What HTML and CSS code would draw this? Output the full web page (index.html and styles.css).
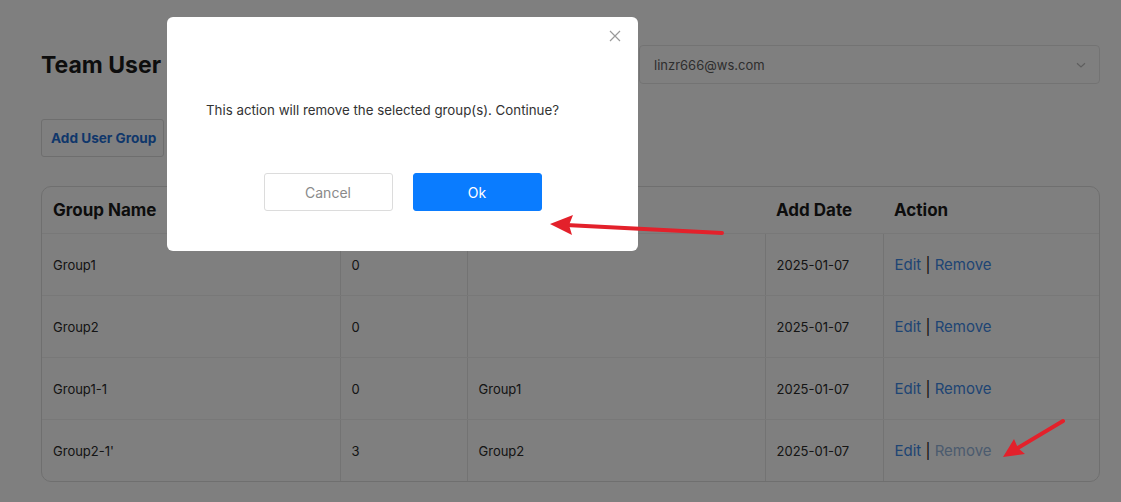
FILE: index.html
```html
<!DOCTYPE html>
<html lang="en">
<head>
<meta charset="utf-8">
<title>Team User Group</title>
<link rel="stylesheet" href="styles.css">
</head>
<body>
<div class="page">
  <div class="topbar">
    <h1 class="title">Team User Group</h1>
    <div class="select">
      <span class="select-value">linzr666@ws.com</span>
      <svg class="chev" width="12" height="12" viewBox="0 0 12 12"><path d="M2 4.2 L6 8 L10 4.2" fill="none" stroke="#bdbdbd" stroke-width="1.2"/></svg>
    </div>
  </div>
  <div class="toolbar">
    <button class="btn-add">Add User Group</button>
  </div>
  <div class="table-wrap">
    <table class="grid">
      <thead>
        <tr><th class="c1">Group Name</th><th class="c2">Users</th><th class="c3">Parent Group</th><th class="c4">Add Date</th><th class="c5">Action</th></tr>
      </thead>
      <tbody>
        <tr><td>Group1</td><td>0</td><td></td><td>2025-01-07</td><td class="act"><a>Edit</a> | <a>Remove</a></td></tr>
        <tr><td>Group2</td><td>0</td><td></td><td>2025-01-07</td><td class="act"><a>Edit</a> | <a>Remove</a></td></tr>
        <tr><td>Group1-1</td><td>0</td><td>Group1</td><td>2025-01-07</td><td class="act"><a>Edit</a> | <a>Remove</a></td></tr>
        <tr><td>Group2-1'</td><td>3</td><td>Group2</td><td>2025-01-07</td><td class="act"><a>Edit</a> | <a class="hover">Remove</a></td></tr>
      </tbody>
    </table>
  </div>
</div>

<div class="mask"></div>

<div class="modal">
  <div class="modal-head">
    <svg class="close" width="12" height="12" viewBox="0 0 12 12"><path d="M1 1 L11 11 M11 1 L1 11" stroke="#9a9a9a" stroke-width="1.2"/></svg>
  </div>
  <p class="modal-msg">This action will remove the selected group(s). Continue?</p>
  <div class="modal-actions">
    <button class="btn-cancel">Cancel</button>
    <button class="btn-ok">Ok</button>
  </div>
</div>

<svg class="annot" width="1121" height="502" viewBox="0 0 1121 502">
  <g fill="#e3212b" stroke="#e3212b">
    <line x1="722" y1="233" x2="566" y2="225" stroke-width="4" stroke-linecap="round"/>
    <polygon points="550,224 573,215 569,225 572,235" stroke="none"/>
    <line x1="1063" y1="421" x2="1016" y2="449" stroke-width="4" stroke-linecap="round"/>
    <polygon points="1003,457 1014,439 1018,448 1025,454" stroke="none"/>
  </g>
</svg>
</body>
</html>
```

FILE: styles.css
```css
html, body {
  margin: 0;
  padding: 0;
  background: #ffffff;
  font-family: Inter, "Liberation Sans", Arial, sans-serif;
  color: #222;
  overflow: hidden;
}

.page {
  width: 1059px;
  padding: 45px 21px 0 41px;
}

.topbar {
  display: flex;
  align-items: center;
  justify-content: space-between;
  height: 39px;
}

.title {
  margin: 0;
  font-size: 23px;
  font-weight: 700;
  color: #1a1a1a;
}

.select {
  width: 461px;
  height: 39px;
  border: 1px solid #e6e6e6;
  border-radius: 4px;
  display: flex;
  align-items: center;
  justify-content: space-between;
  padding: 0 12px 0 14px;
  box-sizing: border-box;
}

.select-value {
  font-size: 13px;
  color: #5c5c5c;
}

.toolbar {
  margin-top: 35px;
  display: flex;
}

.btn-add {
  height: 38px;
  width: 123px;
  background: #fff;
  border: 1px solid #dcdcdc;
  border-radius: 3px;
  font-family: inherit;
  font-size: 13.6px;
  font-weight: 700;
  color: #1f6fd6;
  padding: 0 9px;
  text-align: left;
  white-space: nowrap;
}

.table-wrap {
  margin-top: 29px;
  border: 1px solid #dedede;
  border-radius: 10px;
  overflow: hidden;
}

.grid {
  width: 100%;
  border-collapse: collapse;
  table-layout: fixed;
}

.grid th {
  height: 46px;
  text-align: left;
  font-size: 17px;
  font-weight: 700;
  color: #1a1a1a;
  padding: 0 11px;
  border-bottom: 1px solid #f0f0f0;
}

.grid td {
  height: 61px;
  font-size: 13px;
  color: #2a2a2a;
  padding: 0 11px;
  border-bottom: 1px solid #f0f0f0;
  border-left: 1px solid #e6e6e6;
}

.grid td:first-child { border-left: none; }
.grid tbody tr:last-child td { border-bottom: none; }

.c1 { width: 276px; }
.c2 { width: 105px; }
.c3 { width: 276px; }
.c4 { width: 96px; }

.grid td.act {
  font-size: 15px;
  color: #1a1a1a;
}

.act a {
  color: #3f8ae8;
  cursor: pointer;
}

.act a.hover {
  color: #97b6dd;
}

.mask {
  position: fixed;
  inset: 0;
  background: rgba(0, 0, 0, 0.5);
}

.modal {
  position: fixed;
  left: 167px;
  top: 17px;
  width: 471px;
  height: 234px;
  background: #fff;
  border-radius: 6px;
  box-sizing: border-box;
  padding: 0 39px;
}

.modal-head {
  height: 38px;
  display: flex;
  justify-content: flex-end;
  align-items: flex-start;
  margin-right: -22px;
}

.close {
  display: block;
  margin-top: 13px;
}

.modal-msg {
  margin: 45px 0 0 0;
  font-size: 13.3px;
  line-height: 20px;
  color: #333;
}

.modal-actions {
  margin-top: 53px;
  display: flex;
  justify-content: center;
  gap: 20px;
}

.modal-actions button {
  width: 129px;
  height: 38px;
  border-radius: 3px;
  font-family: inherit;
  font-size: 14px;
  cursor: pointer;
}

.btn-cancel {
  background: #fff;
  border: 1px solid #dcdcdc;
  color: #8a8a8a;
}

.btn-ok {
  background: #0a7cff;
  border: 1px solid #0a7cff;
  color: #fff;
}

.annot {
  position: fixed;
  left: 0;
  top: 0;
  pointer-events: none;
}
```
